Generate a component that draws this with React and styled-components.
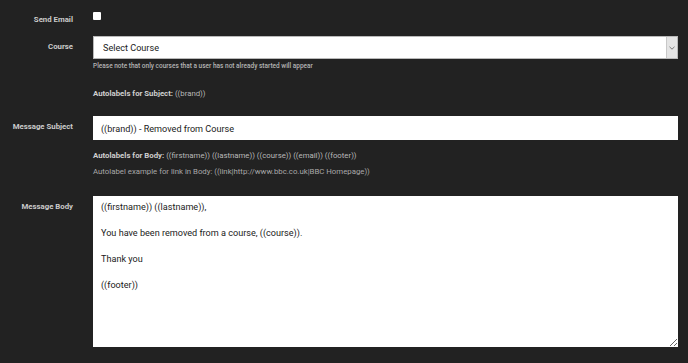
import React from "react";
import styled, { createGlobalStyle } from "styled-components";

const Global = createGlobalStyle`
  html, body { margin: 0; padding: 0; background: #222222; }
  body { font-family: Roboto, "Liberation Sans", Arial, sans-serif; }
  * { box-sizing: border-box; }
`;

const Page = styled.div`
  width: 688px;
  height: 363px;
  background: #222222;
  padding-top: 12px;
  overflow: hidden;
`;

const Row = styled.div`
  display: grid;
  grid-template-columns: 73px 585px;
  column-gap: 20px;
  align-items: start;
  margin-top: ${(p) => p.$top || 0}px;
`;

const Label = styled.label`
  text-align: right;
  font-size: 7.8px;
  line-height: 10px;
  font-weight: 700;
  color: #cacaca;
  padding-top: ${(p) => p.$pad ?? 6}px;
  white-space: nowrap;
`;

const Field = styled.div`
  display: flex;
  flex-direction: column;
  min-width: 0;
`;

const Checkbox = styled.input.attrs({ type: "checkbox" })`
  appearance: none;
  margin: 0;
  width: 8px;
  height: 8px;
  background: #ffffff;
  border-radius: 1px;
`;

const SelectBox = styled.div`
  display: flex;
  height: 23px;
  background: #ffffff;
  border: 1px solid #b9b9b9;
`;

const NativeSelect = styled.select`
  appearance: none;
  flex: 1;
  border: 0;
  outline: none;
  background: transparent;
  padding: 1px 0 0 9px;
  font-family: Roboto, "Liberation Sans", Arial, sans-serif;
  font-size: 9.1px;
  color: #1a1a1a;
`;

const SelectArrow = styled.div`
  width: 11px;
  display: flex;
  align-items: center;
  justify-content: center;
  background: #e4e4e4;
  border-left: 1px solid #c8c8c8;
`;

const Hint = styled.div`
  margin-top: 3px;
  font-size: 6.5px;
  line-height: 8px;
  font-weight: 500;
  color: #b4b4b4;
  white-space: nowrap;
`;

const Note = styled.div`
  margin-top: ${(p) => p.$top || 0}px;
  font-size: 7.8px;
  line-height: ${(p) => p.$lh || 10}px;
  color: ${(p) => p.$color || "#b8b8b8"};
  white-space: nowrap;
  b { font-weight: 700; color: #cfcfcf; }
`;

const TextInput = styled.input`
  height: 24px;
  border: 0;
  outline: none;
  background: #ffffff;
  padding: 1px 8px 0;
  font-family: Roboto, "Liberation Sans", Arial, sans-serif;
  font-size: 9.1px;
  color: #1a1a1a;
`;

const TextArea = styled.textarea`
  height: 151px;
  border: 0;
  outline: none;
  background: #ffffff;
  padding: 5px 8px;
  font-family: Roboto, "Liberation Sans", Arial, sans-serif;
  font-size: 9.1px;
  line-height: 13px;
  color: #1a1a1a;
  resize: vertical;
`;

const BODY = `((firstname)) ((lastname)),

You have been removed from a course, ((course)).

Thank you

((footer))`;

export default function App() {
  return (
    <Page>
      <Global />
      <Row>
        <Label $pad={3}>Send Email</Label>
        <Field>
          <Checkbox />
        </Field>
      </Row>
      <Row $top={11}>
        <Label>Course</Label>
        <Field>
          <SelectBox>
            <NativeSelect defaultValue="">
              <option value="">Select Course</option>
            </NativeSelect>
            <SelectArrow>
              <svg width="6" height="4" viewBox="0 0 6 4">
                <path d="M0.5 0.8 L3 3.2 L5.5 0.8" fill="none" stroke="#7a7a7a" strokeWidth="1" />
              </svg>
            </SelectArrow>
          </SelectBox>
          <Hint>Please note that only courses that a user has not already started will appear</Hint>
          <Note $top={19}>
            <b>Autolabels for Subject:</b> ((brand))
          </Note>
        </Field>
      </Row>
      <Row $top={17}>
        <Label>Message Subject</Label>
        <Field>
          <TextInput defaultValue="((brand)) - Removed from Course" />
          <Note $top={8} $lh={16}>
            <b>Autolabels for Body:</b> ((firstname)) ((lastname)) ((course)) ((email)) ((footer))
          </Note>
          <Note $lh={16} $color="#a8a8a8">
            Autolabel example for link in Body: ((link|http://www.bbc.co.uk|BBC Homepage))
          </Note>
        </Field>
      </Row>
      <Row $top={16}>
        <Label>Message Body</Label>
        <Field>
          <TextArea defaultValue={BODY} />
        </Field>
      </Row>
    </Page>
  );
}
